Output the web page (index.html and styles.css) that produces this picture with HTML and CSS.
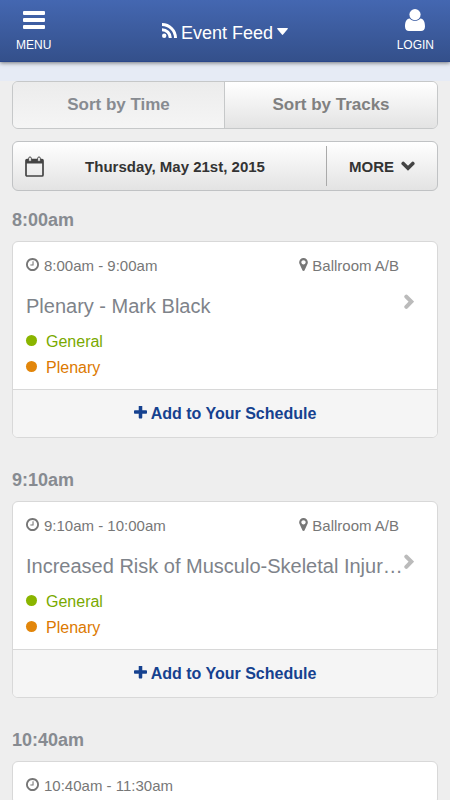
FILE: index.html
```html
<!DOCTYPE html>
<html lang="en">
<head>
<meta charset="utf-8">
<meta name="viewport" content="width=device-width, initial-scale=1">
<title>Event Feed</title>
<link rel="stylesheet" href="styles.css">
</head>
<body>
<svg class="sprite" aria-hidden="true">
  <symbol id="clock" viewBox="128 128 1536 1536"><path d="M1024 544v448q0 14-9 23t-23 9h-320q-14 0-23-9t-9-23v-64q0-14 9-23t23-9h224v-352q0-14 9-23t23-9h64q14 0 23 9t9 23zm416 352q0-148-73-273t-198-198-273-73-273 73-198 198-73 273 73 273 198 198 273 73 273-73 198-198 73-273zm224 0q0 209-103 385.500t-279.500 279.500-385.500 103-385.500-103-279.500-279.500-103-385.500 103-385.500 279.500-279.500 385.500-103 385.500 103 279.500 279.500 103 385.500z"/></symbol>
  <symbol id="pin" viewBox="384 128 1024 1536"><path d="M1152 640q0-106-75-181t-181-75-181 75-75 181 75 181 181 75 181-75 75-181zm256 0q0 109-33 179l-364 774q-16 33-47.500 52t-67.500 19-67.500-19-46.500-52l-365-774q-33-70-33-179 0-212 150-362t362-150 362 150 150 362z"/></symbol>
  <symbol id="plus" viewBox="192 192 1408 1408"><path d="M1600 736v192q0 40-28 68t-68 28h-416v416q0 40-28 68t-68 28h-192q-40 0-68-28t-28-68v-416h-416q-40 0-68-28t-28-68v-192q0-40 28-68t68-28h416v-416q0-40 28-68t68-28h192q40 0 68 28t28 68v416h416q40 0 68 28t28 68z"/></symbol>
  <symbol id="right" viewBox="0 0 10 16"><path d="M2.300 2.600 7.300 7.700 2.300 12.800" fill="none" stroke="currentColor" stroke-width="4" stroke-linecap="round"/></symbol>
</svg>
<header class="topbar">
  <button class="nav-btn" type="button">
    <svg class="nav-icon menu-icon" viewBox="0 0 22 22" aria-hidden="true"><path d="M1 2h20a1 1 0 0 1 1 1v2a1 1 0 0 1-1 1H1a1 1 0 0 1-1-1V3a1 1 0 0 1 1-1zM1 9h20a1 1 0 0 1 1 1v2a1 1 0 0 1-1 1H1a1 1 0 0 1-1-1v-2a1 1 0 0 1 1-1zM1 16h20a1 1 0 0 1 1 1v2a1 1 0 0 1-1 1H1a1 1 0 0 1-1-1v-2a1 1 0 0 1 1-1z"/></svg>
    <span>MENU</span>
  </button>
  <button class="feed-btn" type="button">
    <svg class="rss" viewBox="0 0 15 15" aria-hidden="true"><circle cx="2.200" cy="12.800" r="2.200"/><path d="M0 6.700A8.300 8.300 0 0 1 8.300 15M0 1.500A13.500 13.500 0 0 1 13.500 15" fill="none" stroke="currentColor" stroke-width="3"/></svg>
    <span>Event Feed</span>
    <svg class="caret" viewBox="0 0 11 7" aria-hidden="true"><path d="M.7 0h9.600q.9.300.4 1L6.100 6.600q-.6.600-1.200 0L.3 1Q-.2.300.7 0z"/></svg>
  </button>
  <button class="nav-btn nav-login" type="button">
    <svg class="nav-icon" viewBox="0 0 20 22" aria-hidden="true"><path d="M4.600 9.400C1.300 9.600 0 13 0 17.400 0 20.300 1.700 22 4 22h12c2.300 0 4-1.700 4-4.600 0-4.400-1.300-7.800-4.600-8C14 11 12.200 11.900 10 11.900S6 11 4.600 9.400z"/><circle cx="10" cy="5.600" r="5.600"/></svg>
    <span>LOGIN</span>
  </button>
</header>
<div class="strip"></div>
<main class="content">
  <div class="sort">
    <button class="sort-btn sort-active" type="button">Sort by Time</button>
    <button class="sort-btn" type="button">Sort by Tracks</button>
  </div>
  <div class="datebar">
    <button class="date-btn" type="button">
      <svg class="calendar" viewBox="0 0 19 21" aria-hidden="true"><rect x="1" y="3.500" width="17" height="16.500" rx="1" fill="none" stroke="currentColor" stroke-width="1.700"/><path d="M1 3h17v4.500H1z"/><rect x="3.700" y="1" width="2.600" height="4.500" rx="1.200" fill="#fff" stroke="currentColor"/><rect x="12.700" y="1" width="2.600" height="4.500" rx="1.200" fill="#fff" stroke="currentColor"/></svg>
      <span class="date">Thursday, May 21st, 2015</span>
    </button>
    <button class="more-btn" type="button">
      <span>MORE</span>
      <svg class="down" viewBox="0 0 14 10" aria-hidden="true"><path d="M2.200 2.500 7 7.200l4.800-4.700" fill="none" stroke="currentColor" stroke-width="3.600" stroke-linecap="round"/></svg>
    </button>
  </div>

  <section class="slot">
    <h2 class="slot-time">8:00am</h2>
    <article class="card">
      <div class="card-body">
        <div class="meta">
          <span class="meta-item"><svg class="clock"><use href="#clock"/></svg>8:00am - 9:00am</span>
          <span class="meta-item meta-room"><svg class="pin"><use href="#pin"/></svg>Ballroom A/B</span>
        </div>
        <a class="title" href="#"><span class="title-text">Plenary - Mark Black</span><svg class="right"><use href="#right"/></svg></a>
        <ul class="tags">
          <li class="tag general">General</li>
          <li class="tag plenary">Plenary</li>
        </ul>
      </div>
      <button class="add" type="button"><svg class="plus"><use href="#plus"/></svg>Add to Your Schedule</button>
    </article>
  </section>

  <section class="slot">
    <h2 class="slot-time">9:10am</h2>
    <article class="card">
      <div class="card-body">
        <div class="meta">
          <span class="meta-item"><svg class="clock"><use href="#clock"/></svg>9:10am - 10:00am</span>
          <span class="meta-item meta-room"><svg class="pin"><use href="#pin"/></svg>Ballroom A/B</span>
        </div>
        <a class="title" href="#"><span class="title-text">Increased Risk of Musculo-Skeletal Injur…</span><svg class="right"><use href="#right"/></svg></a>
        <ul class="tags">
          <li class="tag general">General</li>
          <li class="tag plenary">Plenary</li>
        </ul>
      </div>
      <button class="add" type="button"><svg class="plus"><use href="#plus"/></svg>Add to Your Schedule</button>
    </article>
  </section>

  <section class="slot">
    <h2 class="slot-time">10:40am</h2>
    <article class="card">
      <div class="card-body">
        <div class="meta">
          <span class="meta-item"><svg class="clock"><use href="#clock"/></svg>10:40am - 11:30am</span>
        </div>
      </div>
    </article>
  </section>
</main>
</body>
</html>
```

FILE: styles.css
```css
* { box-sizing: border-box; }
html { scrollbar-width: none; }
body {
  margin: 0;
  background: #eee;
  color: #777;
  font-family: "Liberation Sans", Arial, sans-serif;
  font-size: 15px;
}
button {
  margin: 0;
  padding: 0;
  border: 0;
  background: none;
  color: inherit;
  font: inherit;
  cursor: pointer;
}
svg { display: block; flex: none; fill: currentColor; }
.sprite { position: absolute; width: 0; height: 0; }

.topbar {
  position: relative;
  display: grid;
  grid-template-columns: 1fr auto 1fr;
  align-items: center;
  height: 62px;
  padding: 0 16px;
  color: #fff;
  background: linear-gradient(#4467b1, #34508b);
  border-bottom: 1px solid #2b478a;
  box-shadow: 0 1px 4px rgba(0, 0, 0, .5);
  text-shadow: 0 -1px 1px #2b478a;
}
.nav-btn {
  display: flex;
  flex-direction: column;
  align-items: center;
  justify-self: start;
  gap: 7px;
  font-size: 12px;
  line-height: 14px;
}
.nav-login { justify-self: end; }
.nav-icon { width: 20px; height: 22px; }
.menu-icon { width: 22px; }
.feed-btn {
  display: flex;
  align-items: center;
  gap: 4px;
  padding-top: 4px;
  font-size: 18px;
  line-height: 22px;
}
.rss { width: 15px; height: 15px; margin-bottom: 4px; }
.caret { width: 11px; height: 7px; margin-bottom: 3px; }

.strip { height: 19px; background: #e6ebf5; }
.content { padding: 0 12px; }

.sort {
  display: grid;
  grid-template-columns: 1fr 1fr;
  height: 48px;
  overflow: hidden;
  border: 1px solid #c6c8c9;
  border-radius: 6px;
}
.sort-btn {
  color: #808080;
  background: linear-gradient(#fff, #e3e3e3);
  font-size: 17px;
  font-weight: bold;
}
.sort-active {
  color: #878b91;
  background: linear-gradient(#ececec, #f5f5f5);
  border-right: 1px solid #c6c8c9;
}

.datebar {
  display: flex;
  height: 50px;
  margin-top: 12px;
  padding: 4px 0;
  border: 1px solid #c0c2c4;
  border-radius: 6px;
  color: #333;
  background: linear-gradient(#fff, #e3e3e3);
  font-size: 15px;
  font-weight: bold;
}
.date-btn {
  display: flex;
  flex: 1;
  align-items: center;
  padding: 0 12px;
  border-right: 1px solid #aaa;
}
.date { flex: 1; padding-right: 8px; }
.calendar { width: 19px; height: 21px; color: #444; }
.more-btn {
  display: flex;
  align-items: center;
  justify-content: center;
  gap: 7px;
  width: 110px;
}
.down { width: 14px; height: 10px; color: #444; }

.slot { margin-bottom: 31px; }
.slot-time {
  margin: 0;
  padding: 18px 0 10px;
  color: #878b91;
  font-size: 18px;
  line-height: 22px;
}
.slot + .slot .slot-time { padding-top: 0; }
.card {
  overflow: hidden;
  border: 1px solid #d8d8d8;
  border-radius: 6px;
  background: #fff;
}
.card-body { padding: 14px 12px 8px 13px; }
.meta {
  display: flex;
  justify-content: space-between;
  padding-right: 26px;
  line-height: 20px;
}
.meta-item { display: flex; align-items: center; gap: 5px; }
.meta-room { gap: 4px; }
.clock { width: 13px; height: 13px; margin-bottom: 3px; }
.pin { width: 9px; height: 13px; margin-bottom: 3px; }
.title {
  display: flex;
  justify-content: space-between;
  margin: 18px 11px 11px 0;
  color: #7e838a;
  font-size: 20px;
  line-height: 24px;
  text-decoration: none;
}
.title-text {
  overflow: hidden;
  text-overflow: ellipsis;
  white-space: nowrap;
}
.right { width: 10px; height: 16px; color: #bbb; }
.tags { margin: 0; padding: 0; list-style: none; }
.tag {
  display: flex;
  align-items: center;
  gap: 9px;
  font-size: 16px;
  line-height: 26px;
}
.tag::before {
  width: 11px;
  height: 11px;
  margin-bottom: 3px;
  border-radius: 50%;
  background: currentColor;
  content: "";
}
.general { color: #79a900; }
.general::before { background: #8ab500; }
.plenary { color: #dc7900; }
.plenary::before { background: #e2860b; }
.add {
  display: flex;
  align-items: center;
  justify-content: center;
  gap: 4px;
  width: 100%;
  height: 48px;
  padding-top: 1px;
  border-top: 1px solid #d8d8d8;
  color: #15418f;
  background: #f5f5f5;
  font-size: 16px;
  font-weight: bold;
}
.plus { width: 13px; height: 13px; margin-bottom: 3px; }
```
